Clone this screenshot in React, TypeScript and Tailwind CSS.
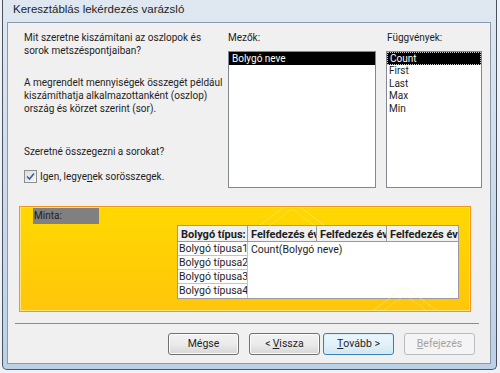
import React from 'react';

const rows = ['Bolygó típusa1', 'Bolygó típusa2', 'Bolygó típusa3', 'Bolygó típusa4'];
const funcs = ['Count', 'First', 'Last', 'Max', 'Min'];

const Btn: React.FC<{ children: React.ReactNode; focused?: boolean; disabled?: boolean; className?: string }> = ({ children, focused, disabled, className }) => (
  <div
    className={
      'h-[22px] w-[71px] rounded-[3px] border flex items-center justify-center ' +
      (disabled
        ? 'border-[#b8bcc0] bg-[#f4f4f4] text-[#a3a3a3] '
        : focused
        ? 'border-[#3c7fb1] bg-gradient-to-b from-[#eaf6fd] via-[#e4f1f9] to-[#cfe6f4] shadow-[inset_0_0_0_1px_#d8f0fc] '
        : 'border-[#707070] bg-gradient-to-b from-[#f2f2f2] via-[#ebebeb] to-[#d6d6d6] shadow-[inset_0_0_0_1px_#fcfcfc] ') +
      (className || '')
    }
  >
    {children}
  </div>
);

export default function App() {
  return (
    <div className="w-[500px] h-[373px] bg-[#eef1f5] overflow-hidden font-['Roboto','Segoe_UI',sans-serif] text-[10px] text-[#1e1e1e]">
      {/* ablakkeret */}
      <div className="ml-[2px] w-[495px] h-[370px] border border-t-0 border-[#4a5260] rounded-b-[5px] bg-gradient-to-b from-[#dfe8f1] via-[#cddbea] to-[#bcd0e6] flex flex-col pl-[4px] pr-[5px] pb-[5px]">
        <div className="h-[22px] flex items-center pl-[6px] pb-[2px] font-['Liberation_Sans',sans-serif] text-[11.5px] text-[#1e1e1e]">
          Keresztáblás lekérdezés varázsló
        </div>

        <div className="flex-1 border border-[#8a99ad] bg-[#f0f0f0] flex flex-col">
          {/* felső rész */}
          <div className="h-[165px] flex items-start pl-[16px] pt-[8px] leading-[13px]">
            <div className="w-[204px] flex flex-col">
              <p>Mit szeretne kiszámítani az oszlopok és<br />sorok metszéspontjaiban?</p>
              <p className="mt-[19px] whitespace-nowrap">
                A megrendelt mennyiségek összegét például<br />
                kiszámíthatja alkalmazottanként (oszlop)<br />
                ország és körzet szerint (sor).
              </p>
              <p className="mt-[30px]">Szeretné összegezni a sorokat?</p>
              <div className="mt-[12px] flex items-center gap-[3px]">
                <div className="w-[13px] h-[13px] border border-[#8e8f8f] bg-gradient-to-br from-[#dcdcdc] to-[#f8f8f8] flex items-center justify-center">
                  <svg width="9" height="9" viewBox="0 0 9 9">
                    <path d="M1 4.5 L3.5 7 L8 1.5" fill="none" stroke="#3f5f9a" strokeWidth="1.6" />
                  </svg>
                </div>
                <span>
                  Igen, legye<span className="underline">n</span>ek sorösszegek.
                </span>
              </div>
            </div>

            <div className="w-[148px] flex flex-col">
              <div className="h-[13px]">Mezők:</div>
              <div className="mt-[7px] h-[137px] border border-[#828790] bg-white">
                <div className="h-[13px] bg-black text-white pl-[3px] leading-[13px]">Bolygó neve</div>
              </div>
            </div>

            <div className="ml-[10px] w-[96px] flex flex-col">
              <div className="h-[13px] pl-[1px]">Függvények:</div>
              <div className="mt-[7px] h-[137px] border border-[#828790] bg-white">
                {funcs.map((f, i) => (
                  <div
                    key={f}
                    className={
                      'h-[12.75px] leading-[12.75px] pl-[2px] ' +
                      (i === 0 ? 'bg-black text-white border border-dotted border-[#c8c8c8] pl-[1px] leading-[10.75px]' : 'text-[#1e1e1e]')
                    }
                  >
                    {f}
                  </div>
                ))}
              </div>
            </div>
          </div>

          {/* minta */}
          <div className="relative mt-[18px] ml-[11px] w-[452px] h-[106px] border border-[#f7941d] overflow-hidden">
            <div className="h-full border border-[#ffe27a] bg-gradient-to-b from-[#ffd800] to-[#ffc60a] pl-[12px]">
              <div className="w-[66px] h-[16px] bg-[#808080] pl-[1px] leading-[15px] text-[#222]">Minta:</div>
              <div className="ml-[144px] mt-[1px] w-[282px] border border-[#9a9a9a] bg-white leading-[13px] text-[10.5px]">
                <div className="flex h-[16px] bg-[#f0f0f0] font-bold text-[11px] border-b border-[#9a9a9a]">
                  <div className="w-[70px] shrink-0 overflow-hidden whitespace-nowrap border-r border-[#9a9a9a] pl-[3px] pt-[2px]">Bolygó típus:</div>
                  <div className="w-[69px] shrink-0 overflow-hidden whitespace-nowrap border-r border-[#9a9a9a] pl-[3px] pt-[2px]">Felfedezés év</div>
                  <div className="w-[70px] shrink-0 overflow-hidden whitespace-nowrap border-r border-[#9a9a9a] pl-[3px] pt-[2px]">Felfedezés év</div>
                  <div className="flex-1 overflow-hidden whitespace-nowrap pl-[3px] pt-[2px]">Felfedezés év</div>
                </div>
                <div className="flex">
                  <div className="w-[70px] shrink-0 flex flex-col">
                    {rows.map((r, i) => (
                      <div key={r} className={'h-[14px] border-r border-[#c4c4c4] pl-[1px] whitespace-nowrap overflow-hidden ' + (i < 3 ? 'border-b' : '')}>
                        {r}
                      </div>
                    ))}
                  </div>
                  <div className="pl-[3px] pt-[1px] whitespace-nowrap">Count(Bolygó neve)</div>
                </div>
              </div>
            </div>
            <svg className="absolute inset-0 pointer-events-none" width="452" height="106" viewBox="0 0 452 106">
              <path d="M240 18 L272 -6 L304 18" fill="none" stroke="#fff3a0" strokeOpacity="0.5" />
              <path d="M245 22 L272 2 L299 22" fill="none" stroke="#fff3a0" strokeOpacity="0.35" />
              <path d="M350 106 L385 80 L420 106" fill="none" stroke="#fff3a0" strokeOpacity="0.45" />
              <path d="M360 106 L385 88 L410 106" fill="none" stroke="#fff3a0" strokeOpacity="0.35" />
            </svg>
          </div>

          {/* elválasztó */}
          <div className="mt-[11px] ml-[7px] w-[464px] h-[1px] bg-[#8c8c8c]" />

          <div className="mt-[9px] flex justify-end pr-[15px] text-[10.5px]">
            <Btn>Mégse</Btn>
            <Btn className="ml-[10px]">
              &lt; <span className="underline ml-[2px]">V</span>issza
            </Btn>
            <Btn focused className="ml-[3px]">
              <span className="underline">T</span>ovább &gt;
            </Btn>
            <Btn disabled className="ml-[10px]">
              <span className="underline">B</span>efejezés
            </Btn>
          </div>
        </div>
      </div>
    </div>
  );
}
